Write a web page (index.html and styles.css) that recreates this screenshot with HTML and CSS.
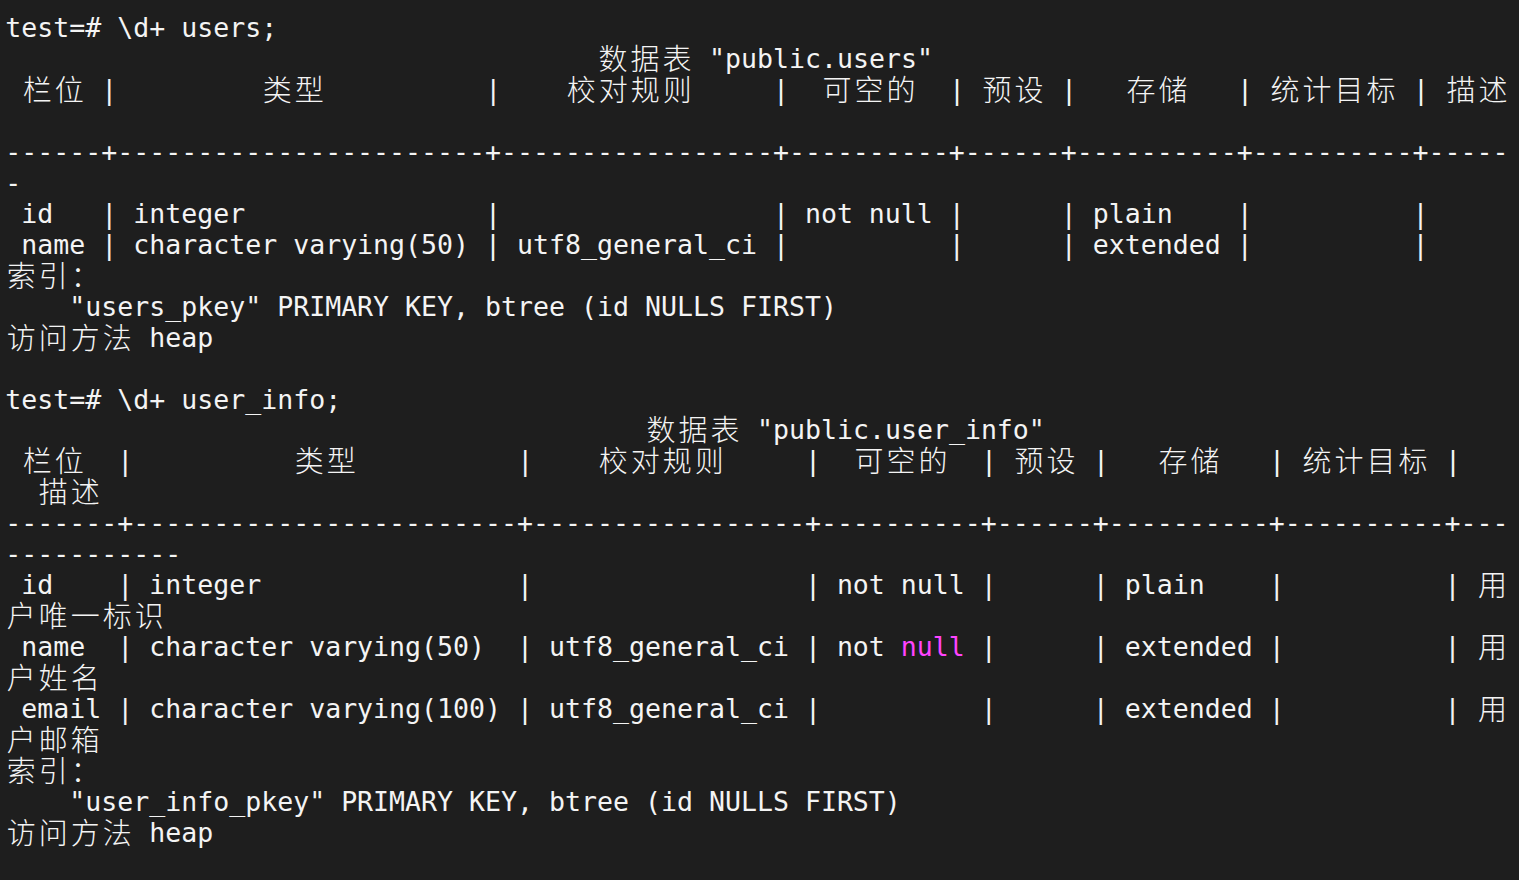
FILE: index.html
```html
<!DOCTYPE html>
<html lang="zh-CN">
<head>
<meta charset="utf-8">
<title>psql</title>
<link rel="stylesheet" href="styles.css">
</head>
<body>
<div class="term">
<div class="ln">test=# \d+ users;</div>
<div class="ln">                                     <span class="w">数据表</span> "public.users"</div>
<div class="ln"> <span class="w">栏位</span> |         <span class="w">类型</span>          |    <span class="w">校对规则</span>     |  <span class="w">可空的</span>  | <span class="w">预设</span> |   <span class="w">存储</span>   | <span class="w">统计目标</span> | <span class="w">描述</span></div>
<div class="ln"></div>
<div class="ln">------+-----------------------+-----------------+----------+------+----------+----------+-----</div>
<div class="ln">-</div>
<div class="ln"> id   | integer               |                 | not null |      | plain    |          |</div>
<div class="ln"> name | character varying(50) | utf8_general_ci |          |      | extended |          |</div>
<div class="ln"><span class="w">索引：</span></div>
<div class="ln">    "users_pkey" PRIMARY KEY, btree (id NULLS FIRST)</div>
<div class="ln"><span class="w">访问方法</span> heap</div>
<div class="ln"></div>
<div class="ln">test=# \d+ user_info;</div>
<div class="ln">                                        <span class="w">数据表</span> "public.user_info"</div>
<div class="ln"> <span class="w">栏位</span>  |          <span class="w">类型</span>          |    <span class="w">校对规则</span>     |  <span class="w">可空的</span>  | <span class="w">预设</span> |   <span class="w">存储</span>   | <span class="w">统计目标</span> |   </div>
<div class="ln">  <span class="w">描述</span></div>
<div class="ln">-------+------------------------+-----------------+----------+------+----------+----------+---</div>
<div class="ln">-----------</div>
<div class="ln"> id    | integer                |                 | not null |      | plain    |          | <span class="w">用</span></div>
<div class="ln"><span class="w">户唯一标识</span></div>
<div class="ln"> name  | character varying(50)  | utf8_general_ci | not <span class="hl">null</span> |      | extended |          | <span class="w">用</span></div>
<div class="ln"><span class="w">户姓名</span></div>
<div class="ln"> email | character varying(100) | utf8_general_ci |          |      | extended |          | <span class="w">用</span></div>
<div class="ln"><span class="w">户邮箱</span></div>
<div class="ln"><span class="w">索引：</span></div>
<div class="ln">    "user_info_pkey" PRIMARY KEY, btree (id NULLS FIRST)</div>
<div class="ln"><span class="w">访问方法</span> heap</div>
</div>
</body>
</html>
```
FILE: styles.css
```css
html, body {
  margin: 0;
  padding: 0;
  background: #1e1e1e;
}

body {
  width: 1519px;
  height: 880px;
  overflow: hidden;
}

.term {
  padding: 13.3px 0 0 5.3px;
  color: #f4f4f4;
  font-family: "DejaVu Sans Mono", "Liberation Mono", monospace;
  font-size: 26.575px;
  line-height: 30.95px;
}

.ln {
  height: 30.95px;
  white-space: pre;
}

.w {
  font-family: "Noto Sans CJK SC", "Noto Sans CJK JP", sans-serif;
  font-size: 29px;
  font-weight: 300;
  letter-spacing: 3px;
  padding-left: 1.5px;
  margin-right: -1.5px;
  line-height: 0;
  vertical-align: -2px;
}

.hl {
  color: #ff44ff;
}
```
